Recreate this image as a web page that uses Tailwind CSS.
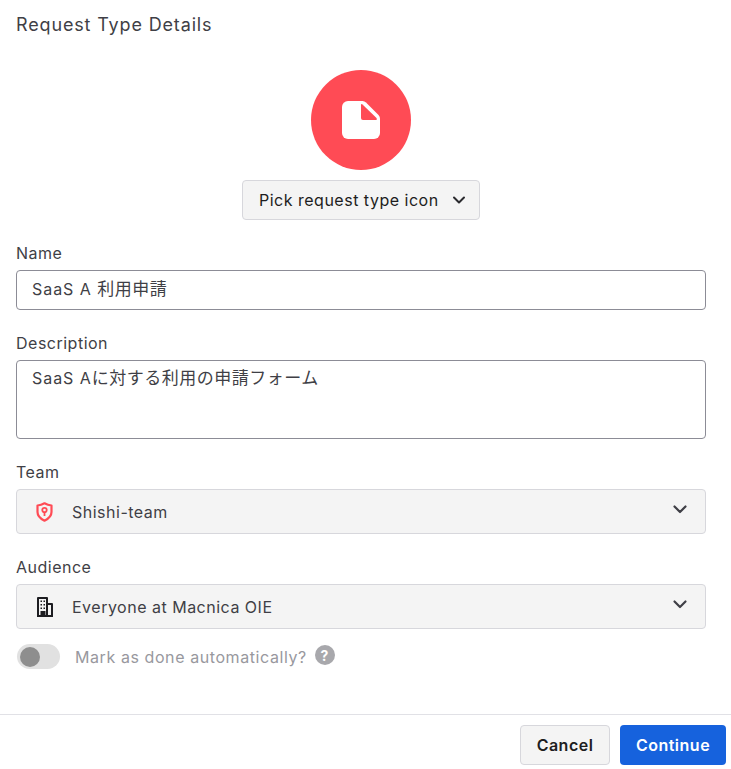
<!DOCTYPE html>
<html lang="en">
<head>
    <meta charset="UTF-8">
    <title>Request Type Details</title>
    <script src="https://cdn.jsdelivr.net/npm/@tailwindcss/browser@4"></script>
</head>
<body class="bg-white h-[769px] overflow-hidden flex flex-col font-['Inter','Noto_Sans_CJK_JP',sans-serif] text-[#1d1d21] text-[16px] tracking-[0.5px]">

<div class="flex-1 pl-4 pr-[25px]">
    <h1 class="h-[50px] pt-[12px] text-[18px] leading-[26px] text-[#3f3f46] tracking-[0.85px]">Request Type Details</h1>

    <div class="mt-[20px] flex flex-col items-center">
        <div class="w-[100px] h-[100px] rounded-full bg-[#ff4b55] flex items-center justify-center">
            <svg width="38" height="38" viewBox="0 0 38 38">
                <path fill="#fff" d="M6 0H20.500Q22.500 0 24 1.500L36.500 14Q38 15.500 38 17.500V32a6 6 0 0 1-6 6H6a6 6 0 0 1-6-6V6a6 6 0 0 1 6-6Z"/>
                <path fill="#ff4b55" d="M19 4Q19 2.500 20.500 3.500L34.500 17Q35.500 19 33.500 19H21a2 2 0 0 1-2-2Z"/>
            </svg>
        </div>
        <button class="mt-[10px] w-[238px] h-[40px] rounded bg-[#f4f4f4] border border-[#d7d7dc] flex items-center justify-between pl-4 pr-[12px] text-[#1d1d21]">
            <span>Pick request type icon</span>
            <svg width="16" height="16" viewBox="0 0 16 16" fill="none" stroke="#2a2a2e" stroke-width="2" stroke-linecap="round" stroke-linejoin="round"><path d="M3 5.500 8 10.500 13 5.500"/></svg>
        </button>
    </div>

    <label class="block mt-[22px] h-[24px] leading-[22px] text-[#3f3f46]">Name</label>
    <div class="mt-[4px] h-[40px] rounded border border-[#8c8c96] flex items-center px-[15px] text-[#3f3f46]"><span class="tracking-[0.95px]">SaaS A <span class="text-[17px] tracking-[0.5px]">利用申請</span></span></div>

    <label class="block mt-[22px] h-[24px] leading-[22px] text-[#3f3f46]">Description</label>
    <div class="mt-[4px] h-[79px] rounded border border-[#8c8c96] px-[15px] pt-[5px] leading-[24px] text-[#3f3f46] tracking-[0.95px]">SaaS A<span class="text-[17px] tracking-[0.5px]">に対する利用の申請フォーム</span></div>

    <label class="block mt-[22px] h-[24px] leading-[22px] text-[#3f3f46]">Team</label>
    <div class="mt-[4px] h-[45px] rounded bg-[#f4f4f4] border border-[#d7d7dc] flex items-center pl-[18px] pr-[17px] text-[#3f3f46]">
        <svg class="shrink-0" width="19" height="20" viewBox="0 0 19 20" fill="none" stroke="#ff4b55" stroke-width="2.200" stroke-linejoin="round">
            <path d="M9.500 1.300c2.500 1.400 4.800 2 7 2.200v6.500c0 3.800-3 6.800-7 8.700-4-1.900-7-4.900-7-8.700V3.500c2.200-.2 4.500-.8 7-2.200Z"/>
            <circle cx="9.500" cy="8" r="2.200" stroke-width="1.800"/>
            <path d="M9.500 10.500v3.500" stroke-width="1.800"/>
        </svg>
        <span class="ml-[18px] flex-1">Shishi-team</span>
        <svg class="mb-[4px]" width="16" height="16" viewBox="0 0 16 16" fill="none" stroke="#3f3f46" stroke-width="2.200" stroke-linecap="round" stroke-linejoin="round"><path d="M2.500 4.500 8 10 13.500 4.500"/></svg>
    </div>

    <label class="block mt-[22px] h-[24px] leading-[22px] text-[#3f3f46]">Audience</label>
    <div class="mt-[4px] h-[45px] rounded bg-[#f4f4f4] border border-[#d7d7dc] flex items-center pl-[18px] pr-[17px] text-[#3f3f46]">
        <svg class="shrink-0" width="19" height="22" viewBox="0 0 19 22">
            <path fill="#1d1d21" fill-rule="evenodd" d="M3 1h9a1 1 0 0 1 1 1v5h4a1 1 0 0 1 1 1v13H2V2a1 1 0 0 1 1-1Zm1 2v16h1.500v-4h5v4H11V3H4Zm1.500 1.500h1.500V6H5.500V4.500Zm3 0H10V6H8.500V4.500ZM5.500 8H7v1.500H5.500V8Zm3 0H10v1.500H8.500V8Zm-3 3.500H7V13H5.500v-1.500Zm3 0H10V13H8.500v-1.500ZM13 9v10h3V9h-3Z"/>
        </svg>
        <span class="ml-[18px] flex-1">Everyone at Macnica OIE</span>
        <svg class="mb-[4px]" width="16" height="16" viewBox="0 0 16 16" fill="none" stroke="#3f3f46" stroke-width="2.200" stroke-linecap="round" stroke-linejoin="round"><path d="M2.500 4.500 8 10 13.500 4.500"/></svg>
    </div>

    <div class="mt-[15px] flex items-center h-[25px]">
        <div class="ml-[1px] w-[43px] h-[25px] rounded-full bg-[#e1e1e1] flex items-center pl-[3px]">
            <div class="w-[20px] h-[20px] rounded-full bg-[#8e8e8e]"></div>
        </div>
        <span class="ml-[15px] text-[#98989e] mt-[1px] tracking-[0.58px]">Mark as done automatically?</span>
        <span class="ml-[8px] mb-[3px] w-[20px] h-[20px] rounded-full bg-[#a8a8ac] text-white text-[14px] font-bold flex items-center justify-center">?</span>
    </div>
</div>

<div class="h-[55px] border-t border-[#e1e1e6] flex justify-end items-start pt-[10px] pr-[5px] gap-[10px]">
    <button class="w-[90px] h-[40px] rounded bg-[#f4f4f4] border border-[#d7d7dc] font-semibold text-[#1d1d21]">Cancel</button>
    <button class="w-[106px] h-[40px] rounded bg-[#1662dd] font-semibold text-white">Continue</button>
</div>

</body>
</html>
